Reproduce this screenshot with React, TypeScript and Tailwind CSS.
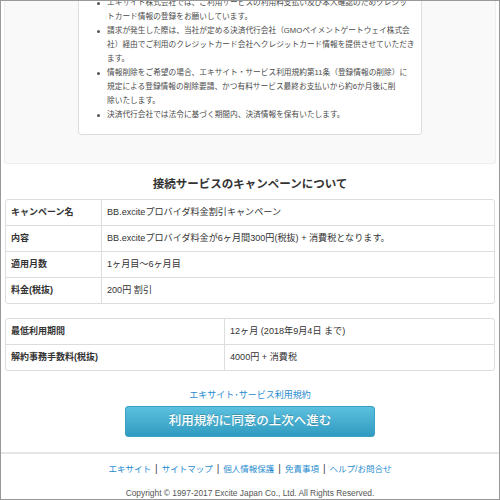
import React from "react";

const FONT = '"Liberation Sans", Arial, "Noto Sans CJK JP", sans-serif';

const items: string[][] = [
  [
    "エキサイト株式会社では、ご利用サービスの利用料支払い及び本人確認のためクレジッ",
    "トカード情報の登録をお願いしています。",
  ],
  [
    "請求が発生した際は、当社が定める決済代行会社（GMOペイメントゲートウェイ株式会",
    "社）経由でご利用のクレジットカード会社へクレジットカード情報を提供させていただき",
    "ます。",
  ],
  [
    "情報削除をご希望の場合、エキサイト・サービス利用規約第11条（登録情報の削除）に",
    "規定による登録情報の削除要請、かつ有料サービス最終お支払いから約6か月後に削",
    "除いたします。",
  ],
  ["決済代行会社では法令に基づく期間内、決済情報を保有いたします。"],
];

const table1: [string, string][] = [
  ["キャンペーン名", "BB.exciteプロバイダ料金割引キャンペーン"],
  ["内容", "BB.exciteプロバイダ料金が6ヶ月間300円(税抜) + 消費税となります。"],
  ["適用月数", "1ヶ月目～6ヶ月目"],
  ["料金(税抜)", "200円 割引"],
];

const table2: [string, string][] = [
  ["最低利用期間", "12ヶ月 (2018年9月4日 まで)"],
  ["解約事務手数料(税抜)", "4000円 + 消費税"],
];

function Table({ rows, labelW }: { rows: [string, string][]; labelW: string }) {
  return (
    <div className="border border-[#dddddd] rounded-[3px] overflow-hidden">
      {rows.map(([k, v], i) => (
        <div key={i} className={`flex ${i > 0 ? "h-[26px] border-t border-[#dddddd]" : "h-[25px]"}`}>
          <div className={`${labelW} shrink-0 border-r border-[#dddddd] flex items-center pl-[5px] font-bold text-[9px] text-[#333333]`}>
            {k}
          </div>
          <div className="flex-1 flex items-center pl-[5px] text-[9.1px] text-[#333333] whitespace-nowrap">{v}</div>
        </div>
      ))}
    </div>
  );
}

export default function App() {
  const links = ["エキサイト", "サイトマップ", "個人情報保護", "免責事項", "ヘルプ/お問合せ"];
  return (
    <div
      className="w-[500px] h-[500px] border border-[#999999] bg-white overflow-hidden flex flex-col"
      style={{ fontFamily: FONT }}
    >
      <div className="px-[3px]">
        <div className="bg-[#f9f9f9] border border-t-0 border-[#eeeeee] rounded-b-[3px] h-[163px] flex justify-center">
          <div className="w-[344px] h-[147px] -mt-[13px] bg-white border border-[#dddddd] rounded-[3px] pt-[7px] pl-[18px]">
            {items.map((lines, i) => (
              <div key={i} className="relative pl-[10px]">
                <span className="absolute left-0 top-[6px] w-[3px] h-[3px] rounded-full bg-[#555555]" />
                {lines.map((l, j) => (
                  <div key={j} className="text-[7.7px] leading-[14px] text-[#4a4a4a] whitespace-nowrap">
                    {l}
                  </div>
                ))}
              </div>
            ))}
          </div>
        </div>
      </div>

      <div className="mt-[12px] text-center font-bold text-[11.5px] leading-[16px] text-[#333333]">
        接続サービスのキャンペーンについて
      </div>

      <div className="px-[4px] mt-[7px]">
        <Table rows={table1} labelW="w-[96px]" />
      </div>

      <div className="px-[4px] mt-[14px]">
        <Table rows={table2} labelW="w-[219px]" />
      </div>

      <div className="mt-[17px] text-center text-[9px] leading-[14px] text-[#1f8ccf]">
        エキサイト･サービス利用規約
      </div>

      <div className="mt-[4px] flex justify-center">
        <div className="w-[250px] h-[31px] rounded-[3px] border border-[#3aa0c4] bg-linear-to-b from-[#5cc1df] to-[#2f9bc0] flex items-center justify-center text-white text-[12.5px] font-medium [text-shadow:0_-1px_0_rgba(0,0,0,0.2)]">
          利用規約に同意の上次へ進む
        </div>
      </div>

      <div className="mt-[15px] h-[2px] bg-[#e6e6e6]" />

      <div className="mt-[8px] flex justify-center items-center text-[8.5px] leading-[14px]">
        {links.map((l, i) => (
          <React.Fragment key={i}>
            {i > 0 && <span className="mx-[4px] text-[#444444] text-[10px] leading-[14px]">|</span>}
            <span className="text-[#1f8ccf]">{l}</span>
          </React.Fragment>
        ))}
      </div>

      <div className="mt-[11px] text-center text-[8.4px] leading-[12px] text-[#555555]">
        Copyright © 1997-2017 Excite Japan Co., Ltd. All Rights Reserved.
      </div>
    </div>
  );
}
